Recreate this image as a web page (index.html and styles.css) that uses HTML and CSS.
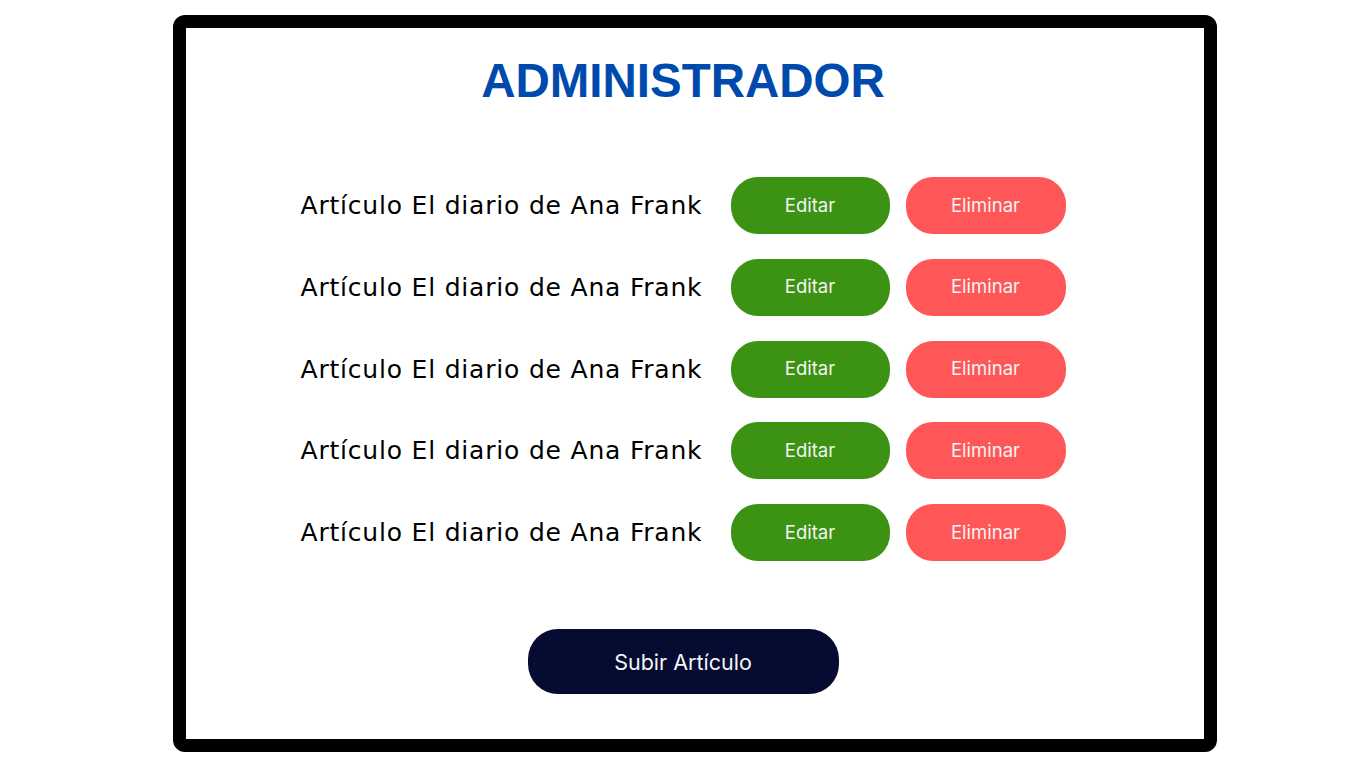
FILE: index.html
```html
<!DOCTYPE html>
<html lang="es">
<head>
<meta charset="utf-8">
<title>Administrador</title>
<link rel="stylesheet" href="styles.css">
</head>
<body>
<main class="frame">
  <h1 class="title">ADMINISTRADOR</h1>
  <ul class="list">
    <li class="row"><span class="name">Artículo El diario de Ana Frank</span><button class="btn edit">Editar</button><button class="btn delete">Eliminar</button></li>
    <li class="row"><span class="name">Artículo El diario de Ana Frank</span><button class="btn edit">Editar</button><button class="btn delete">Eliminar</button></li>
    <li class="row"><span class="name">Artículo El diario de Ana Frank</span><button class="btn edit">Editar</button><button class="btn delete">Eliminar</button></li>
    <li class="row"><span class="name">Artículo El diario de Ana Frank</span><button class="btn edit">Editar</button><button class="btn delete">Eliminar</button></li>
    <li class="row"><span class="name">Artículo El diario de Ana Frank</span><button class="btn edit">Editar</button><button class="btn delete">Eliminar</button></li>
  </ul>
  <div class="actions"><button class="upload">Subir Artículo</button></div>
</main>
</body>
</html>
```
FILE: styles.css
```css
html, body {
  margin: 0;
  padding: 0;
  background: #ffffff;
}
body {
  width: 1366px;
  height: 768px;
  overflow: hidden;
  font-family: "Open Sans", "Liberation Sans", sans-serif;
}
.frame {
  box-sizing: border-box;
  width: 1044px;
  height: 737px;
  margin: 15px 0 0 173px;
  border: 13px solid #000000;
  border-radius: 12px;
  padding: 29px 24px 0 0;
  display: flex;
  flex-direction: column;
  align-items: center;
}
.title {
  margin: 0;
  font-family: "Liberation Sans", Arial, sans-serif;
  font-weight: 700;
  font-size: 47.5px;
  line-height: 47px;
  color: #004aad;
}
.list {
  list-style: none;
  margin: 73px 0 0 0;
  padding: 0;
  display: flex;
  flex-direction: column;
  gap: 24.75px;
}
.row {
  display: grid;
  grid-template-columns: 414px 159px 160px;
  column-gap: 16px;
  align-items: center;
  height: 57px;
}
.name {
  font-family: "DejaVu Sans", sans-serif;
  font-size: 25px;
  letter-spacing: 0.8px;
  color: #000000;
  white-space: nowrap;
}
.btn {
  height: 57px;
  border: none;
  border-radius: 27px;
  color: #f4f4f4;
  font-family: "Inter", "Lato", sans-serif;
  font-size: 18.5px;
  font-weight: 400;
  padding: 0 0 2px 0;
  cursor: pointer;
}
.edit {
  background: #3b9213;
}
.delete {
  background: #ff5757;
}
.actions {
  margin-top: 68px;
}
.upload {
  width: 311px;
  height: 65px;
  border: none;
  border-radius: 30px;
  background: #050b31;
  color: #f4f4f4;
  font-family: "Inter", "Lato", sans-serif;
  font-size: 21.5px;
  font-weight: 400;
  padding: 0;
}
```
